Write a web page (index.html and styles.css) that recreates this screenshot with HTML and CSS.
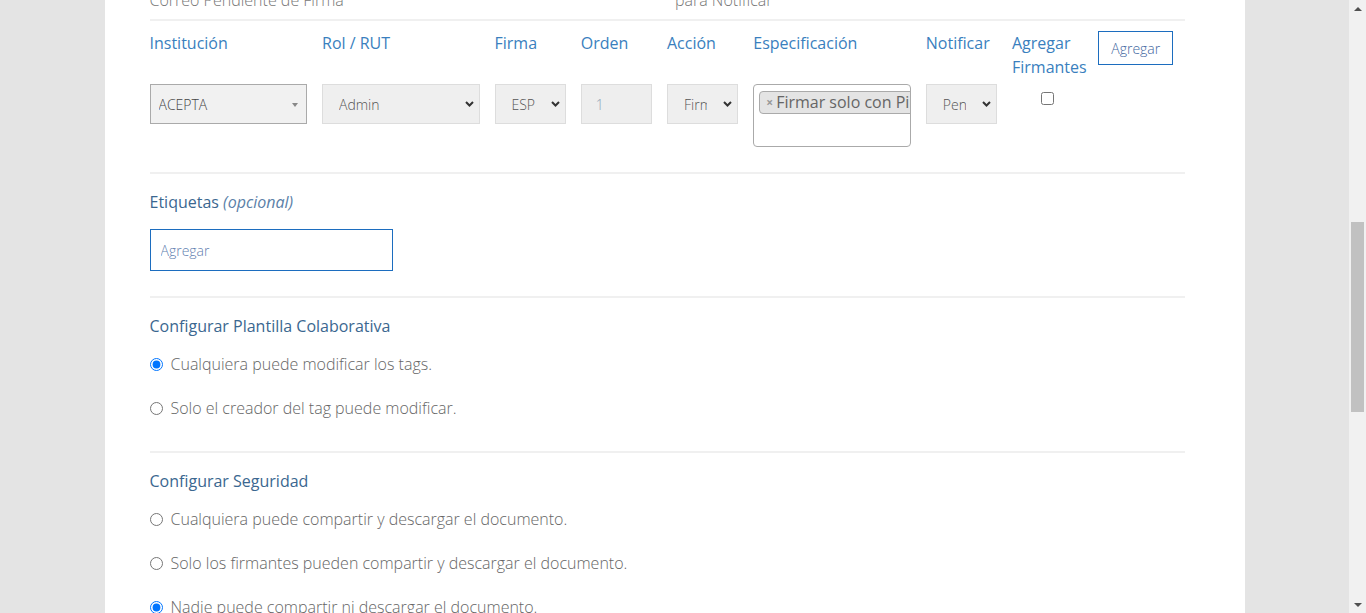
FILE: index.html
```html
<!DOCTYPE html>
<html lang="es">
<head>
<meta charset="utf-8">
<title>Documento</title>
<link rel="stylesheet" href="styles.css">
</head>
<body>
<main class="page">
  <section class="upper">
    <h1 class="page-title">Crear Documento</h1>
    <div class="field">
      <label class="field-title">Nombre del documento</label>
      <input class="line-input" type="text" value="Contrato de servicios">
    </div>
    <div class="field">
      <label class="field-title">Descripción <em class="optional">(opcional)</em></label>
      <textarea class="area-input"></textarea>
    </div>
    <div class="sep"></div>
    <div class="grid12 notify-controls">
      <div class="span6 cell">
        <label class="field-title">Recordatorio</label>
        <input class="line-input" type="text" value="3">
      </div>
      <div class="span6 cell">
        <label class="field-title">Firmantes</label>
        <input class="line-input" type="text" value="Todos">
      </div>
    </div>
    <div class="grid12 notify-help">
      <p class="span6 help">Días para reenviar el<br>Correo Pendiente de Firma</p>
      <p class="span6 help help-offset">Seleccione los firmantes<br>para Notificar</p>
    </div>
  </section>

  <div class="sep sep-first" id="anchor"></div>

  <section class="signers">
    <div class="cell s2 col-label">Institución</div>
    <div class="cell s2 col-label">Rol / RUT</div>
    <div class="cell s1 col-label">Firma</div>
    <div class="cell s1 col-label">Orden</div>
    <div class="cell s1 col-label">Acción</div>
    <div class="cell s2 col-label">Especificación</div>
    <div class="cell s1 col-label">Notificar</div>
    <div class="cell s1 col-label">Agregar Firmantes</div>
    <div class="cell s1 cell-btn"><button class="btn-outline" type="button">Agregar</button></div>

    <div class="cell s2">
      <div class="select-wrap">
        <select class="select2-like"><option>ACEPTA</option></select>
        <span class="tri"></span>
      </div>
    </div>
    <div class="cell s2">
      <div class="select-wrap">
        <select class="native-select"><option>Admin</option></select>
        <svg class="chev" width="9" height="6" viewBox="0 0 9 6"><path d="M1 1 L4.5 4.5 L8 1" fill="none" stroke="#333" stroke-width="2"/></svg>
      </div>
    </div>
    <div class="cell s1">
      <div class="select-wrap">
        <select class="native-select"><option>ESP</option></select>
        <svg class="chev" width="9" height="6" viewBox="0 0 9 6"><path d="M1 1 L4.5 4.5 L8 1" fill="none" stroke="#333" stroke-width="2"/></svg>
      </div>
    </div>
    <div class="cell s1">
      <input class="order-input" type="text" value="1" readonly>
    </div>
    <div class="cell s1">
      <div class="select-wrap">
        <select class="native-select"><option>Firmar</option></select>
        <svg class="chev" width="9" height="6" viewBox="0 0 9 6"><path d="M1 1 L4.5 4.5 L8 1" fill="none" stroke="#333" stroke-width="2"/></svg>
      </div>
    </div>
    <div class="cell s2">
      <div class="multi">
        <span class="chip"><span class="chip-x">×</span><span class="chip-text">Firmar solo con Pin</span></span>
      </div>
    </div>
    <div class="cell s1">
      <div class="select-wrap">
        <select class="native-select"><option>Pendiente</option></select>
        <svg class="chev" width="9" height="6" viewBox="0 0 9 6"><path d="M1 1 L4.5 4.5 L8 1" fill="none" stroke="#333" stroke-width="2"/></svg>
      </div>
    </div>
    <div class="cell s1">
      <input class="check" type="checkbox">
    </div>
  </section>

  <div class="sep sep-mid"></div>

  <section class="block block-tags">
    <h3 class="block-title">Etiquetas <em class="optional">(opcional)</em></h3>
    <input class="tag-input" type="text" placeholder="Agregar">
  </section>

  <div class="sep"></div>

  <section class="block">
    <h3 class="block-title">Configurar Plantilla Colaborativa</h3>
    <div class="radios">
      <label class="radio"><input type="radio" name="plantilla" checked><span>Cualquiera puede modificar los tags.</span></label>
      <label class="radio"><input type="radio" name="plantilla"><span>Solo el creador del tag puede modificar.</span></label>
    </div>
  </section>

  <div class="sep"></div>

  <section class="block">
    <h3 class="block-title">Configurar Seguridad</h3>
    <div class="radios">
      <label class="radio"><input type="radio" name="seguridad"><span>Cualquiera puede compartir y descargar el documento.</span></label>
      <label class="radio"><input type="radio" name="seguridad"><span>Solo los firmantes pueden compartir y descargar el documento.</span></label>
      <label class="radio"><input type="radio" name="seguridad" checked><span>Nadie puede compartir ni descargar el documento.</span></label>
    </div>
  </section>

  <div class="sep"></div>

  <section class="block actions">
    <button class="btn-outline" type="button">Cancelar</button>
    <button class="btn-solid" type="button">Guardar</button>
  </section>
</main>

<div class="scrollbar" aria-hidden="true">
  <div class="sb-btn"><span class="sb-up"></span></div>
  <div class="sb-track"><div class="sb-thumb"></div></div>
  <div class="sb-btn"><span class="sb-down"></span></div>
</div>
<script src="script.js"></script>
</body>
</html>
```

FILE: styles.css
```css
html, body {
  margin: 0;
  padding: 0;
}
body {
  background: #e4e4e4;
  font-family: "Open Sans", "Liberation Sans", sans-serif;
  color: #6d6d6d;
  padding-right: 17px;
}
.page {
  box-sizing: border-box;
  width: 1140px;
  min-height: 1868px;
  margin: 0 auto;
  padding: 0 60px 0 45px;
  background: #fff;
}
.upper {
  padding-top: 60px;
}
.page-title {
  margin: 0 0 40px;
  font-size: 28px;
  font-weight: 400;
  color: #335d86;
}
.field {
  margin-bottom: 30px;
}
.field-title {
  display: block;
  margin-bottom: 10px;
  font-size: 16px;
  line-height: 24px;
  color: #335d86;
}
.optional {
  color: #5b7fa8;
}
.line-input {
  box-sizing: border-box;
  width: 400px;
  height: 40px;
  border: 1px solid #ddd;
  padding: 0 12px;
  font: 300 14px "Open Sans", sans-serif;
  color: #555;
}
.area-input {
  box-sizing: border-box;
  display: block;
  width: 100%;
  height: 120px;
  border: 1px solid #ddd;
}
.grid12 {
  display: grid;
  grid-template-columns: repeat(12, minmax(0, 1fr));
}
.span6 { grid-column: span 6; }
.cell {
  box-sizing: border-box;
  min-width: 0;
  padding-right: 15px;
}
.notify-controls {
  margin-top: 25px;
}
.notify-help {
  margin-top: 10px;
}
.help {
  margin: 0;
  font-size: 16px;
  font-weight: 300;
  line-height: 24px;
  color: #777;
}
.help-offset {
  padding-left: 8px;
}
.sep {
  border-top: 2px solid #f0f0f0;
}
.sep-first {
  margin-top: 7px;
}

/* signers table */
.signers {
  display: grid;
  grid-template-columns: repeat(12, minmax(0, 1fr));
  row-gap: 5px;
  align-items: start;
  padding-top: 10px;
}
.s1 { grid-column: span 1; }
.s2 { grid-column: span 2; }
.col-label {
  font-size: 16px;
  line-height: 24px;
  color: #3a7fbe;
}
.cell-btn {
  padding-right: 0;
}
.btn-outline {
  box-sizing: border-box;
  height: 34px;
  padding: 0 12px;
  border: 1px solid #1c6dbf;
  border-radius: 0;
  background: #fff;
  font: 300 14px "Open Sans", sans-serif;
  color: #3f66a0;
  white-space: nowrap;
  cursor: pointer;
}
.btn-solid {
  box-sizing: border-box;
  height: 34px;
  padding: 0 12px;
  border: 1px solid #1c6dbf;
  background: #1c6dbf;
  color: #fff;
  font: 300 14px "Open Sans", sans-serif;
}
.select-wrap {
  position: relative;
}
.native-select,
.select2-like {
  box-sizing: border-box;
  display: block;
  width: 100%;
  height: 40px;
  -webkit-appearance: none;
  appearance: none;
  border-radius: 0;
  font: 300 14px "Open Sans", sans-serif;
  color: #555;
  outline: none;
}
.native-select {
  background: #efefef;
  border: 1px solid #ddd;
  padding: 0 30px 0 16px;
}
.select2-like {
  background: #f1f1f1;
  border: 1px solid #aaa;
  padding: 0 24px 0 8px;
  color: #444;
}
.chev {
  position: absolute;
  right: 6px;
  top: 17px;
  pointer-events: none;
}
.tri {
  position: absolute;
  right: 9px;
  top: 19px;
  width: 0;
  height: 0;
  border-style: solid;
  border-width: 4px 3px 0 3px;
  border-color: #888 transparent transparent transparent;
  pointer-events: none;
}
.order-input {
  box-sizing: border-box;
  display: block;
  width: 100%;
  height: 40px;
  border: 1px solid #ddd;
  background: #eee;
  padding: 0 14px;
  font: 300 14px "Open Sans", sans-serif;
  color: #8fa3b8;
  outline: none;
}
.multi {
  box-sizing: border-box;
  height: 63px;
  border: 1px solid #aaa;
  border-radius: 4px;
  background: #fff;
  padding: 5px 0 5px 5px;
  overflow: hidden;
  white-space: nowrap;
}
.chip {
  box-sizing: border-box;
  display: inline-flex;
  align-items: center;
  gap: 3px;
  height: 23px;
  padding: 0 5px 0 6px;
  border: 1px solid #aaa;
  border-radius: 4px;
  background: #e4e4e4;
  font-size: 16px;
  line-height: 21px;
  color: #666;
}
.chip-x {
  font-size: 12px;
  font-weight: 700;
  color: #999;
}
.check {
  display: block;
  width: 13px;
  height: 13px;
  margin: 8px auto 0;
}
.sep-mid {
  margin-top: 25px;
}

/* lower blocks */
.block {
  padding: 16px 0 11px;
}
.block-tags {
  padding-bottom: 25px;
}
.block-title {
  margin: 0 0 14px;
  font-size: 16px;
  line-height: 24px;
  font-weight: 400;
  color: #3b6790;
}
.block-tags .block-title {
  margin-bottom: 15px;
}
.tag-input {
  box-sizing: border-box;
  display: block;
  width: 243px;
  height: 42px;
  border: 1px solid #1c6dbf;
  padding: 0 10px;
  font: 300 14px "Open Sans", sans-serif;
  color: #555;
  outline: none;
}
.tag-input::placeholder {
  color: #5f80b0;
}
.radios {
  display: flex;
  flex-direction: column;
}
.radio {
  display: flex;
  align-items: center;
  height: 24px;
  margin-bottom: 20px;
  font-size: 16px;
  font-weight: 300;
  line-height: 24px;
  color: #666;
}
.radio input {
  width: 13px;
  height: 13px;
  margin: 0 8px 0 0;
}
.actions {
  display: flex;
  gap: 10px;
  padding-top: 20px;
}

/* browser scrollbar */
.scrollbar {
  position: fixed;
  top: 0;
  right: 0;
  bottom: 0;
  width: 17px;
  display: flex;
  flex-direction: column;
  background: #f1f1f1;
}
.sb-btn {
  height: 17px;
  display: flex;
  align-items: center;
  justify-content: center;
}
.sb-track {
  flex: 1;
}
.sb-thumb {
  margin: 205px 2px 0;
  height: 190px;
  background: #c1c1c1;
}
.sb-up,
.sb-down {
  width: 0;
  height: 0;
  border-style: solid;
  border-color: transparent;
}
.sb-up {
  border-width: 0 4px 4px;
  border-bottom-color: #505050;
}
.sb-down {
  border-width: 4px 4px 0;
  border-top-color: #505050;
}
```

FILE: script.js
```js
(function () {
  function place() {
    var a = document.getElementById('anchor');
    if (!a) return;
    var y = a.getBoundingClientRect().top + window.scrollY - 19;
    window.scrollTo(0, y);
  }
  place();
  window.addEventListener('load', place);
})();
```
